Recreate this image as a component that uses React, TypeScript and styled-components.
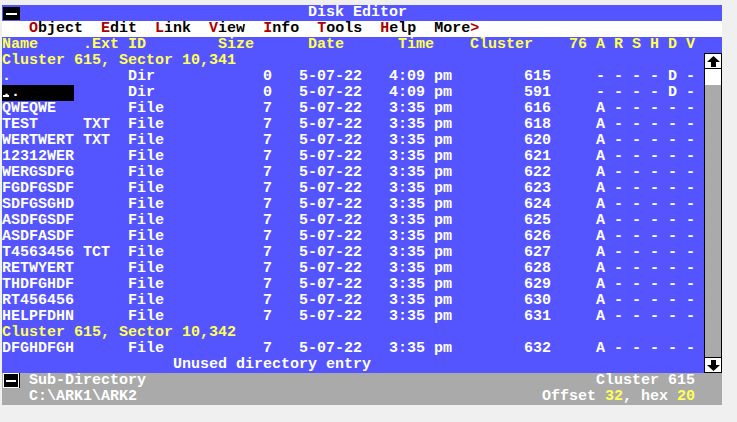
import React from 'react';
import styled, { createGlobalStyle } from 'styled-components';

const CELL = 9;

const dos = {
  blue: '#5555ff',
  yellow: '#ffff55',
  white: '#ffffff',
  gray: '#aaaaaa',
  red: '#aa0000',
  black: '#000000',
};

type Tone = 'white' | 'yellow' | 'black';

const GlobalStyle = createGlobalStyle`
  html, body {
    margin: 0;
    padding: 0;
    background: #f0f0f0;
  }
`;

const Screen = styled.div`
  margin: 5px 0 0 2px;
  width: 720px;
  display: flex;
  flex-direction: column;
  font-family: 'Liberation Mono', 'DejaVu Sans Mono', monospace;
  font-size: 15px;
  font-weight: 700;
  line-height: 16px;
  white-space: pre;
`;

const TitleBar = styled.div`
  display: flex;
  height: 16px;
  background: ${dos.blue};
  color: ${dos.white};
`;

const CloseBox = styled.div<{ $framed?: boolean }>`
  box-sizing: border-box;
  width: 16px;
  height: ${(p) => (p.$framed ? 15 : 13)}px;
  margin: ${(p) => (p.$framed ? '0 1px 0 1px' : '2px 1px 0 1px')};
  background: ${dos.black};
  border: ${(p) => (p.$framed ? `1px solid ${dos.white}` : 'none')};
  box-shadow: 1px 0 0 ${dos.black};
  display: flex;
  align-items: center;
  justify-content: center;
  flex-shrink: 0;

  &::before {
    content: '';
    width: ${(p) => (p.$framed ? 10 : 11)}px;
    height: 2px;
    background: ${dos.white};
  }
`;

const Title = styled.span`
  padding-left: ${32 * CELL}px;
`;

const MenuBar = styled.div`
  display: flex;
  gap: ${2 * CELL}px;
  height: 16px;
  padding-left: ${3 * CELL}px;
  background: ${dos.white};
  color: ${dos.black};
`;

const MenuItem = styled.span``;

const Hot = styled.span`
  color: ${dos.red};
`;

const Line = styled.div<{ $tone?: Tone; $bg?: string }>`
  display: flex;
  height: 16px;
  color: ${(p) => dos[p.$tone ?? 'white']};
  background: ${(p) => p.$bg ?? 'transparent'};
`;

const Cell = styled.span<{ $w: number; $right?: boolean }>`
  flex-shrink: 0;
  width: ${(p) => p.$w * CELL}px;
  text-align: ${(p) => (p.$right ? 'right' : 'left')};
`;

const Selected = styled.span`
  display: inline-block;
  width: ${8 * CELL}px;
  height: 16px;
  background: ${dos.black};
  color: ${dos.white};
  vertical-align: top;
`;

const Cursor = styled.span`
  position: relative;
  display: inline-block;
  height: 16px;
  vertical-align: top;

  &::after {
    content: '';
    position: absolute;
    left: 1px;
    top: 10px;
    width: 6px;
    height: 2px;
    background: ${dos.white};
  }
`;

const Body = styled.div`
  display: flex;
  background: ${dos.blue};
`;

const Listing = styled.div`
  width: ${78 * CELL}px;
  display: flex;
  flex-direction: column;
`;

const ScrollBar = styled.div`
  box-sizing: border-box;
  width: ${2 * CELL}px;
  display: flex;
  flex-direction: column;
  background: ${dos.gray};
  border-left: 1px solid ${dos.black};
  border-right: 1px solid ${dos.black};
`;

const ArrowButton = styled.div`
  box-sizing: border-box;
  height: 16px;
  background: ${dos.white};
  border-top: 1px solid ${dos.black};
  border-bottom: 1px solid ${dos.black};
  display: flex;
  align-items: center;
  justify-content: center;
`;

const Thumb = styled.div`
  height: 16px;
  background: ${dos.white};
`;

const Track = styled.div`
  flex: 1;
`;

const StatusBar = styled.div`
  display: flex;
  flex-direction: column;
  background: ${dos.gray};
  color: ${dos.white};
`;

const StatusLine = styled.div<{ $indent?: boolean }>`
  display: flex;
  height: 16px;
  align-items: flex-start;
  padding-left: ${(p) => (p.$indent ? 3 * CELL : 0)}px;
  padding-right: ${3 * CELL}px;
`;

const Spacer = styled.span`
  flex: 1;
`;

const Num = styled.span`
  color: ${dos.yellow};
`;

const Arrow: React.FC<{ down?: boolean }> = ({ down }) => (
  <svg width="13" height="11" viewBox="0 0 13 11" style={down ? { transform: 'scaleY(-1)' } : undefined}>
    <polygon points="6.5,0 13,6 9,6 9,11 4,11 4,6 0,6" fill="#000" />
  </svg>
);

type Entry = {
  name: string;
  ext?: string;
  id: 'Dir' | 'File';
  size: string;
  time: string;
  cluster: string;
  selected?: boolean;
};

const ATTR_DIR = '- - - - D -';
const ATTR_FILE = 'A - - - - -';

const firstSector: Entry[] = [
  { name: '.', id: 'Dir', size: '0', time: '4:09 pm', cluster: '615' },
  { name: '..', id: 'Dir', size: '0', time: '4:09 pm', cluster: '591', selected: true },
  { name: 'QWEQWE', id: 'File', size: '7', time: '3:35 pm', cluster: '616' },
  { name: 'TEST', ext: 'TXT', id: 'File', size: '7', time: '3:35 pm', cluster: '618' },
  { name: 'WERTWERT', ext: 'TXT', id: 'File', size: '7', time: '3:35 pm', cluster: '620' },
  { name: '12312WER', id: 'File', size: '7', time: '3:35 pm', cluster: '621' },
  { name: 'WERGSDFG', id: 'File', size: '7', time: '3:35 pm', cluster: '622' },
  { name: 'FGDFGSDF', id: 'File', size: '7', time: '3:35 pm', cluster: '623' },
  { name: 'SDFGSGHD', id: 'File', size: '7', time: '3:35 pm', cluster: '624' },
  { name: 'ASDFGSDF', id: 'File', size: '7', time: '3:35 pm', cluster: '625' },
  { name: 'ASDFASDF', id: 'File', size: '7', time: '3:35 pm', cluster: '626' },
  { name: 'T4563456', ext: 'TCT', id: 'File', size: '7', time: '3:35 pm', cluster: '627' },
  { name: 'RETWYERT', id: 'File', size: '7', time: '3:35 pm', cluster: '628' },
  { name: 'THDFGHDF', id: 'File', size: '7', time: '3:35 pm', cluster: '629' },
  { name: 'RT456456', id: 'File', size: '7', time: '3:35 pm', cluster: '630' },
  { name: 'HELPFDHN', id: 'File', size: '7', time: '3:35 pm', cluster: '631' },
];

const secondSector: Entry[] = [
  { name: 'DFGHDFGH', id: 'File', size: '7', time: '3:35 pm', cluster: '632' },
];

const EntryRow: React.FC<{ e: Entry }> = ({ e }) => (
  <Line>
    <Cell $w={9}>
      {e.selected ? (
        <Selected>
          <Cursor>{e.name[0]}</Cursor>
          {e.name.slice(1)}
        </Selected>
      ) : (
        e.name
      )}
    </Cell>
    <Cell $w={5}>{e.ext ?? ''}</Cell>
    <Cell $w={8}>{e.id}</Cell>
    <Cell $w={8} $right>{e.size}</Cell>
    <Cell $w={10} $right>5-07-22</Cell>
    <Cell $w={10} $right>{e.time}</Cell>
    <Cell $w={11} $right>{e.cluster}</Cell>
    <Cell $w={16} $right>{e.id === 'Dir' ? ATTR_DIR : ATTR_FILE}</Cell>
  </Line>
);

const menu = [
  ['O', 'bject'],
  ['E', 'dit'],
  ['L', 'ink'],
  ['V', 'iew'],
  ['I', 'nfo'],
  ['T', 'ools'],
  ['H', 'elp'],
];

export default function App() {
  return (
    <>
      <GlobalStyle />
      <Screen>
        <TitleBar>
          <CloseBox />
          <Title>Disk Editor</Title>
        </TitleBar>

        <MenuBar>
          {menu.map(([hot, rest]) => (
            <MenuItem key={hot}>
              <Hot>{hot}</Hot>
              {rest}
            </MenuItem>
          ))}
          <MenuItem>
            More<Hot>&gt;</Hot>
          </MenuItem>
        </MenuBar>

        <Line $tone="yellow" $bg={dos.blue}>
          <Cell $w={9}>Name</Cell>
          <Cell $w={5}>.Ext</Cell>
          <Cell $w={10}>ID</Cell>
          <Cell $w={10}>Size</Cell>
          <Cell $w={10}>Date</Cell>
          <Cell $w={8}>Time</Cell>
          <Cell $w={11}>Cluster</Cell>
          <Cell $w={3}>76</Cell>
          <Cell $w={14}>A R S H D V</Cell>
        </Line>

        <Body>
          <Listing>
            <Line $tone="yellow">Cluster 615, Sector 10,341</Line>
            {firstSector.map((e) => (
              <EntryRow key={e.name} e={e} />
            ))}
            <Line $tone="yellow">Cluster 615, Sector 10,342</Line>
            {secondSector.map((e) => (
              <EntryRow key={e.name} e={e} />
            ))}
            <Line>
              <Cell $w={19} />
              Unused directory entry
            </Line>
          </Listing>
          <ScrollBar>
            <ArrowButton>
              <Arrow />
            </ArrowButton>
            <Thumb />
            <Track />
            <ArrowButton>
              <Arrow down />
            </ArrowButton>
          </ScrollBar>
        </Body>

        <StatusBar>
          <StatusLine>
            <CloseBox $framed />
            <Cell $w={1} />
            Sub-Directory
            <Spacer />
            Cluster 615
          </StatusLine>
          <StatusLine $indent>
            C:\ARK1\ARK2
            <Spacer />
            Offset <Num>32</Num>, hex <Num>20</Num>
          </StatusLine>
        </StatusBar>
      </Screen>
    </>
  );
}
